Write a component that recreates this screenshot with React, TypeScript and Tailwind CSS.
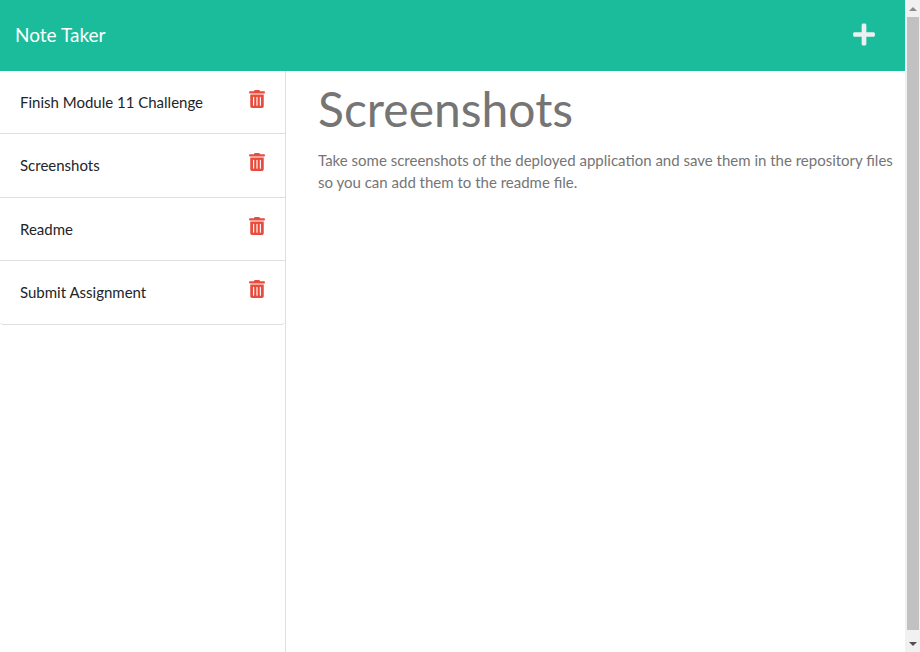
import { useState } from "react";
import { FaPlus, FaTrashAlt } from "react-icons/fa";

type Note = { id: number; title: string; text: string };

const initialNotes: Note[] = [
  { id: 1, title: "Finish Module 11 Challenge", text: "" },
  {
    id: 2,
    title: "Screenshots",
    text: "Take some screenshots of the deployed application and save them in the repository files so you can add them to the readme file.",
  },
  { id: 3, title: "Readme", text: "" },
  { id: 4, title: "Submit Assignment", text: "" },
];

function Header({ onAdd }: { onAdd: () => void }) {
  return (
    <header className="flex shrink-0 items-center justify-between bg-[#1abc9c] px-[15px] py-[21px]">
      <a href="#" className="text-[19px] leading-normal text-white">
        Note Taker
      </a>
      <button
        type="button"
        aria-label="New note"
        onClick={onAdd}
        className="mr-[15px] mb-0.5 text-[#ecf0f1]"
      >
        <FaPlus className="h-[25px] w-[22px]" />
      </button>
    </header>
  );
}

function NoteList({
  notes,
  onSelect,
  onDelete,
}: {
  notes: Note[];
  onSelect: (note: Note) => void;
  onDelete: (id: number) => void;
}) {
  return (
    <aside className="w-[286px] shrink-0 border-r border-[#dfdfdf]">
      <ul className="overflow-hidden rounded-b-sm border-b border-[#dfdfdf]">
        {notes.map((note) => (
          <li
            key={note.id}
            className="flex items-center justify-between border-b border-[#dfdfdf] px-5 py-5 leading-normal last:border-b-0"
          >
            <button
              type="button"
              onClick={() => onSelect(note)}
              className="text-left leading-normal text-[#212529]"
            >
              {note.title}
            </button>
            <button
              type="button"
              aria-label={`Delete ${note.title}`}
              onClick={() => onDelete(note.id)}
              className="-mt-0.5 pb-1 text-[#e74c3c]"
            >
              <FaTrashAlt className="h-[18px] w-4" />
            </button>
          </li>
        ))}
      </ul>
    </aside>
  );
}

function ScrollBar() {
  return (
    <div
      aria-hidden="true"
      className="flex w-[15px] shrink-0 flex-col bg-[#f1f1f1] pl-0.5 pr-px"
    >
      <div className="flex h-[17px] items-center justify-center">
        <svg viewBox="0 0 8 4" className="h-1 w-2 fill-[#8b8b8b]">
          <path d="M4 0 8 4H0Z" />
        </svg>
      </div>
      <div className="flex-1 bg-[#c1c1c1]" />
      <div className="flex h-[22px] items-center justify-center pt-1.5">
        <svg viewBox="0 0 8 4" className="h-1 w-2 fill-[#505050]">
          <path d="M0 0H8L4 4Z" />
        </svg>
      </div>
    </div>
  );
}

export default function App() {
  const [notes, setNotes] = useState(initialNotes);
  const [active, setActive] = useState<Note>(initialNotes[1]);

  return (
    <div className="flex h-screen bg-white font-[Lato,sans-serif] text-[15px] leading-normal">
      <div className="flex min-w-0 flex-1 flex-col">
        <Header onAdd={() => setActive({ id: 0, title: "", text: "" })} />
        <div className="flex min-h-0 flex-1">
          <NoteList
            notes={notes}
            onSelect={setActive}
            onDelete={(id) => setNotes(notes.filter((n) => n.id !== id))}
          />
          <main className="flex min-w-0 flex-1 flex-col gap-[3px] pl-8 pr-2">
            <input
              type="text"
              aria-label="Note title"
              placeholder="Note Title"
              value={active.title}
              onChange={(e) => setActive({ ...active, title: e.target.value })}
              className="h-[75px] w-full text-[48px] text-[#757575] outline-none"
            />
            <textarea
              aria-label="Note text"
              placeholder="Note Text"
              value={active.text}
              onChange={(e) => setActive({ ...active, text: e.target.value })}
              className="w-full flex-1 resize-none leading-[22px] text-[#757575] outline-none"
            />
          </main>
        </div>
      </div>
      <ScrollBar />
    </div>
  );
}
